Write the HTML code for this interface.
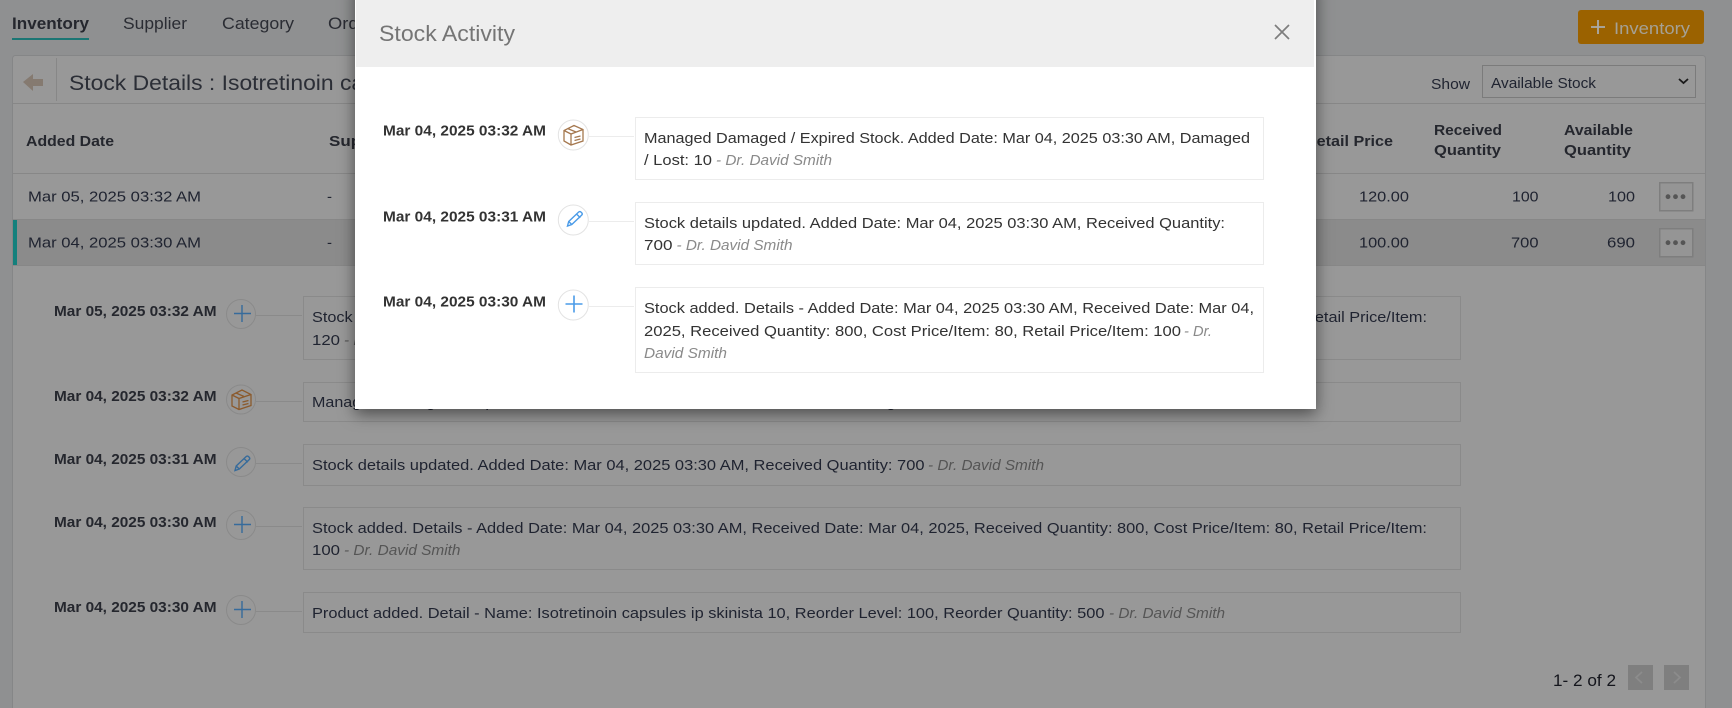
<!DOCTYPE html>
<html lang="en"><head><meta charset="utf-8"><title>Stock Activity</title>
<style>
html,body{margin:0;padding:0;width:1732px;height:708px;overflow:hidden;background:#8f9091}
svg{display:block;position:absolute;left:0;top:0}
text{font-family:"Liberation Sans",sans-serif;font-size:15px;fill:#1f2330;white-space:pre}
.b{font-weight:bold}
.bgi{font-style:italic;fill:#555}
.m{fill:#333}
.mi{font-style:italic;fill:#8a8a8a}
.mb{font-weight:bold;fill:#333}
.bgb{font-weight:bold;fill:#25272e}
.hl{fill:none;stroke:#878787}
</style></head><body>
<svg width="1732" height="708" viewBox="0 0 1732 708" xmlns="http://www.w3.org/2000/svg">
<defs>
<filter id="s" x="-5%" y="-10%" width="110%" height="125%"><feDropShadow dx="0" dy="5" stdDeviation="8" flood-color="#000" flood-opacity=".5"/></filter>
</defs>

<!-- tabs -->
<text x="12" y="29" class="bgb" style="font-size:17px" textLength="77" lengthAdjust="spacingAndGlyphs">Inventory</text>
<rect x="12" y="38" width="77" height="2" fill="#1b7674"/>
<text x="123" y="29" style="font-size:17px;fill:#2a2c33" textLength="64" lengthAdjust="spacingAndGlyphs">Supplier</text>
<text x="222" y="29" style="font-size:17px;fill:#2a2c33" textLength="72" lengthAdjust="spacingAndGlyphs">Category</text>
<text x="328" y="29" style="font-size:17px;fill:#2a2c33" textLength="56" lengthAdjust="spacingAndGlyphs">Orders</text>

<!-- add button -->
<rect x="1578" y="10" width="126" height="34" rx="3" fill="#9b6200"/>
<path d="M1598 20v14M1591 27h14" stroke="#ababab" stroke-width="1.800" fill="none"/>
<text x="1614" y="34" style="font-size:17px;fill:#a5a195" textLength="76" lengthAdjust="spacingAndGlyphs">Inventory</text>

<!-- panel -->
<rect x="12.5" y="55.5" width="1693" height="680" rx="3" fill="#989898" stroke="#858687"/>
<rect x="13" y="219" width="1692" height="46" fill="#8b8b8b"/>
<rect x="13" y="220" width="4" height="45" fill="#14807c"/>
<path class="hl" d="M13 103.5H1705M13 173.5H1705M13 219.5H1705M13 265.5H1705M56.5 58V101"/>
<path d="M23 82l10-8v5h10v7H33v5z" fill="#857a70"/>
<text x="69" y="90" style="font-size:21px;fill:#2b2e36" textLength="500" lengthAdjust="spacingAndGlyphs">Stock Details : Isotretinoin capsules ip skinista 10</text>
<text x="1431" y="89" textLength="39" lengthAdjust="spacingAndGlyphs">Show</text>
<rect x="1482.5" y="65.5" width="213" height="32" fill="#989898" stroke="#7b7b7b"/>
<text x="1491" y="88" textLength="105" lengthAdjust="spacingAndGlyphs">Available Stock</text>
<path d="M1679 79l4.500 4 4.500-4" fill="none" stroke="#1a1a1a" stroke-width="1.800"/>

<!-- header -->
<text x="26" y="146" class="bgb" textLength="88" lengthAdjust="spacingAndGlyphs">Added Date</text>
<text x="329" y="146" class="bgb" textLength="68" lengthAdjust="spacingAndGlyphs">Supplier</text>
<text x="1305" y="146" class="bgb" textLength="88" lengthAdjust="spacingAndGlyphs">Retail Price</text>
<text x="1434" y="135" class="bgb" textLength="68" lengthAdjust="spacingAndGlyphs">Received</text>
<text x="1434" y="155" class="bgb" textLength="67" lengthAdjust="spacingAndGlyphs">Quantity</text>
<text x="1564" y="135" class="bgb" textLength="69" lengthAdjust="spacingAndGlyphs">Available</text>
<text x="1564" y="155" class="bgb" textLength="67" lengthAdjust="spacingAndGlyphs">Quantity</text>

<!-- rows -->
<text x="28" y="201.500" textLength="173" lengthAdjust="spacingAndGlyphs">Mar 05, 2025 03:32 AM</text>
<text x="327" y="201.500">-</text>
<text x="1359" y="201.500" textLength="50" lengthAdjust="spacingAndGlyphs">120.00</text>
<text x="1512" y="201.500" textLength="26.500" lengthAdjust="spacingAndGlyphs">100</text>
<text x="1608" y="201.500" textLength="27" lengthAdjust="spacingAndGlyphs">100</text>
<text x="28" y="247.500" textLength="173" lengthAdjust="spacingAndGlyphs">Mar 04, 2025 03:30 AM</text>
<text x="327" y="247.500">-</text>
<text x="1359" y="247.500" textLength="50" lengthAdjust="spacingAndGlyphs">100.00</text>
<text x="1511" y="247.500" textLength="27.500" lengthAdjust="spacingAndGlyphs">700</text>
<text x="1607" y="247.500" textLength="28" lengthAdjust="spacingAndGlyphs">690</text>
<g fill="#959595" stroke="#7e7e7e" stroke-width="1.500"><rect x="1659.750" y="182.750" width="33" height="28"/><rect x="1659.750" y="228.750" width="33" height="28"/></g>
<g fill="#555"><circle cx="1668" cy="196.700" r="2.400"/><circle cx="1675.500" cy="196.700" r="2.400"/><circle cx="1683" cy="196.700" r="2.400"/><circle cx="1668" cy="242.700" r="2.400"/><circle cx="1675.500" cy="242.700" r="2.400"/><circle cx="1683" cy="242.700" r="2.400"/></g>

<!-- background timeline -->
<g fill="none" stroke="#8a8a8a">
<rect x="303.500" y="296.500" width="1157" height="63"/>
<rect x="303.500" y="382.500" width="1157" height="39"/>
<rect x="303.500" y="444.500" width="1157" height="41"/>
<rect x="303.500" y="507.500" width="1157" height="62"/>
<rect x="303.500" y="592.500" width="1157" height="40"/>
<path d="M256 315.500H302M256 401.500H302M256 463.500H302M256 526.500H302M256 611.500H302"/>
<circle cx="241" cy="314" r="14.500"/><circle cx="241" cy="399.500" r="14.500"/><circle cx="241" cy="462" r="14.500"/><circle cx="241" cy="525" r="14.500"/><circle cx="241" cy="610" r="14.500"/>
</g>
<g fill="none" stroke="#366b9b" stroke-width="1.400">
<path d="M242 305v17M234 313.500h17M242 516v17M234 524.500h17M242 601v17M234 609.500h17"/>
<path d="M235 470.500l1.200-4.500 10-9.500q1.200-.9 2.200 0l1 1q.8 1-.1 2l-10 9.500zM244 458.500l3.800 3.800M236.200 466l3.100 3"/>
</g>
<g fill="none" stroke="#8b5a2c" stroke-width="1.300">
<path d="M232 395v11l7 3.500 12-4v-11l-9-4.500zM232 395l7 3.500 12-4M239 398.500v11M236 393l8 3.500M242.500 402l6-1.500M242.500 405l6-1.500"/>
</g>
<text x="54" y="316" class="bgb" textLength="162.500" lengthAdjust="spacingAndGlyphs">Mar 05, 2025 03:32 AM</text>
<text x="54" y="401" class="bgb" textLength="162.500" lengthAdjust="spacingAndGlyphs">Mar 04, 2025 03:32 AM</text>
<text x="54" y="464" class="bgb" textLength="162.500" lengthAdjust="spacingAndGlyphs">Mar 04, 2025 03:31 AM</text>
<text x="54" y="527" class="bgb" textLength="162.500" lengthAdjust="spacingAndGlyphs">Mar 04, 2025 03:30 AM</text>
<text x="54" y="612" class="bgb" textLength="162.500" lengthAdjust="spacingAndGlyphs">Mar 04, 2025 03:30 AM</text>

<text x="312" y="322" textLength="1115" lengthAdjust="spacingAndGlyphs">Stock added. Details - Added Date: Mar 05, 2025 03:32 AM, Received Date: Mar 05, 2025, Received Quantity: 100, Cost Price/Item: 100, Retail Price/Item:</text>
<text x="312" y="345" textLength="28" lengthAdjust="spacingAndGlyphs">120</text>
<text x="344" y="345" class="bgi" textLength="116" lengthAdjust="spacingAndGlyphs">- Dr. David Smith</text>
<text x="312" y="407" textLength="672" lengthAdjust="spacingAndGlyphs">Managed Damaged / Expired Stock. Added Date: Mar 04, 2025 03:30 AM, Damaged / Lost: 10</text>
<text x="988" y="407" class="bgi" textLength="116" lengthAdjust="spacingAndGlyphs">- Dr. David Smith</text>
<text x="312" y="470" textLength="612.500" lengthAdjust="spacingAndGlyphs">Stock details updated. Added Date: Mar 04, 2025 03:30 AM, Received Quantity: 700</text>
<text x="928" y="470" class="bgi" textLength="116" lengthAdjust="spacingAndGlyphs">- Dr. David Smith</text>
<text x="312" y="533" textLength="1115" lengthAdjust="spacingAndGlyphs">Stock added. Details - Added Date: Mar 04, 2025 03:30 AM, Received Date: Mar 04, 2025, Received Quantity: 800, Cost Price/Item: 80, Retail Price/Item:</text>
<text x="312" y="555" textLength="28" lengthAdjust="spacingAndGlyphs">100</text>
<text x="344" y="555" class="bgi" textLength="116.500" lengthAdjust="spacingAndGlyphs">- Dr. David Smith</text>
<text x="312" y="618" textLength="792.500" lengthAdjust="spacingAndGlyphs">Product added. Detail - Name: Isotretinoin capsules ip skinista 10, Reorder Level: 100, Reorder Quantity: 500</text>
<text x="1109" y="618" class="bgi" textLength="116" lengthAdjust="spacingAndGlyphs">- Dr. David Smith</text>

<!-- pagination -->
<text x="1553" y="686" style="font-size:17px;fill:#14151c" textLength="63" lengthAdjust="spacingAndGlyphs">1- 2 of 2</text>
<rect x="1628" y="665" width="25" height="25" fill="#7f7f7f"/>
<rect x="1664" y="665" width="25" height="25" fill="#7f7f7f"/>
<path d="M1642 672l-6 5.500 6 5.500M1674 672l6 5.500-6 5.500" fill="none" stroke="#8c8c8c" stroke-width="1.800"/>

<!-- modal -->
<rect x="355" y="-20" width="961" height="429" fill="#fff" filter="url(#s)"/>
<rect x="356" y="0" width="958" height="67" fill="#eeeeee"/>
<text x="379" y="41" style="font-size:22px;fill:#757575" textLength="136" lengthAdjust="spacingAndGlyphs">Stock Activity</text>
<path d="M1275 25l14 14M1289 25l-14 14" stroke="#7d7d7d" stroke-width="1.700" fill="none"/>

<g fill="#fff" stroke="#ececec">
<rect x="635.500" y="117.500" width="628" height="62"/>
<rect x="635.500" y="202.500" width="628" height="62"/>
<rect x="635.500" y="287.500" width="628" height="85"/>
</g>
<path d="M589 136.500H634M589 221.500H634M589 306.500H634" stroke="#ececec" fill="none"/>
<g fill="#fff" stroke="#e3e3e3">
<circle cx="573.300" cy="135" r="15"/><circle cx="573.300" cy="220" r="15"/><circle cx="573.300" cy="305" r="15"/>
</g>
<g fill="none" stroke="#a5784f" stroke-width="1.300">
<path d="M564 130.500v10.500l7 4 12-4v-11.500l-9-4zM564 130.500l7 3.500 12-4.500M571 134v11M567.500 128.500l8.500 3.500M574.500 137.500l6-1.500M574.500 140.500l6-1.500"/>
</g>
<g fill="none" stroke="#4a9be8" stroke-width="1.400">
<path d="M567.500 226l1.200-4.500 10-9.500q1.200-.9 2.200 0l1 1q.8 1-.1 2l-10 9.500zM576.500 214l3.800 3.800M568.700 221.500l3.100 3"/>
<path d="M574 295.500v17M565.500 304h17" stroke-width="1.600"/>
</g>

<text x="383" y="135.700" class="mb" textLength="163" lengthAdjust="spacingAndGlyphs">Mar 04, 2025 03:32 AM</text>
<text x="383" y="221.700" class="mb" textLength="163" lengthAdjust="spacingAndGlyphs">Mar 04, 2025 03:31 AM</text>
<text x="383" y="306.700" class="mb" textLength="163" lengthAdjust="spacingAndGlyphs">Mar 04, 2025 03:30 AM</text>

<text x="644" y="143" class="m" textLength="606" lengthAdjust="spacingAndGlyphs">Managed Damaged / Expired Stock. Added Date: Mar 04, 2025 03:30 AM, Damaged</text>
<text x="644" y="165" class="m" textLength="68" lengthAdjust="spacingAndGlyphs">/ Lost: 10</text>
<text x="716" y="165" class="mi" textLength="116" lengthAdjust="spacingAndGlyphs">- Dr. David Smith</text>
<text x="644" y="228" class="m" textLength="581" lengthAdjust="spacingAndGlyphs">Stock details updated. Added Date: Mar 04, 2025 03:30 AM, Received Quantity:</text>
<text x="644" y="250" class="m" textLength="28.500" lengthAdjust="spacingAndGlyphs">700</text>
<text x="676.500" y="250" class="mi" textLength="116" lengthAdjust="spacingAndGlyphs">- Dr. David Smith</text>
<text x="644" y="313" class="m" textLength="610" lengthAdjust="spacingAndGlyphs">Stock added. Details - Added Date: Mar 04, 2025 03:30 AM, Received Date: Mar 04,</text>
<text x="644" y="336" class="m" textLength="537" lengthAdjust="spacingAndGlyphs">2025, Received Quantity: 800, Cost Price/Item: 80, Retail Price/Item: 100</text>
<text x="1184" y="336" class="mi" textLength="28" lengthAdjust="spacingAndGlyphs">- Dr.</text>
<text x="644" y="358" class="mi" textLength="83" lengthAdjust="spacingAndGlyphs">David Smith</text>
</svg>
</body></html>
